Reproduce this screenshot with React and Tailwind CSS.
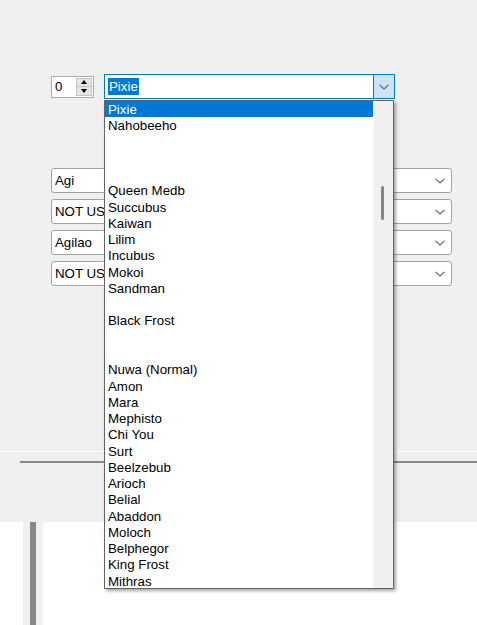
import React from 'react'

const items = [
  'Pixie', 'Nahobeeho', '', '', '', 'Queen Medb', 'Succubus', 'Kaiwan', 'Lilim', 'Incubus',
  'Mokoi', 'Sandman', '', 'Black Frost', '', '', 'Nuwa (Normal)', 'Amon', 'Mara', 'Mephisto',
  'Chi You', 'Surt', 'Beelzebub', 'Arioch', 'Belial', 'Abaddon', 'Moloch', 'Belphegor',
  'King Frost', 'Mithras',
]

function Chevron({ className }) {
  return (
    <svg className={className} width="10" height="6" viewBox="0 0 10 6" fill="none">
      <path d="M0.5 0.8 L5 5 L9.5 0.8" stroke="#606060" strokeWidth="1.1" />
    </svg>
  )
}

function Spinner() {
  return (
    <div className="flex w-[43px] h-[22px] border border-[#acacac] bg-white">
      <div className="flex-1 pl-[3px] leading-[20px]">0</div>
      <div className="w-[16px] my-[1px] mr-[1px] flex flex-col bg-[#e6e6e6] border border-[#c4c4c4]">
        <div className="flex-1 flex items-center justify-center border-b border-[#c4c4c4]">
          <div className="w-0 h-0 border-l-[3.5px] border-r-[3.5px] border-b-[4px] border-l-transparent border-r-transparent border-b-black" />
        </div>
        <div className="flex-1 flex items-center justify-center">
          <div className="w-0 h-0 border-l-[3.5px] border-r-[3.5px] border-t-[4px] border-l-transparent border-r-transparent border-t-black" />
        </div>
      </div>
    </div>
  )
}

function Select({ label }) {
  return (
    <div className="flex items-center w-[401px] h-[25px] rounded-[3px] border border-[#a3a3a3] bg-white pl-[3px]">
      <span className="flex-1 whitespace-nowrap overflow-hidden">{label}</span>
      <Chevron className="mr-[6px]" />
    </div>
  )
}

export default function App() {
  return (
    <div className="relative w-[477px] h-[625px] flex flex-col bg-white overflow-hidden text-[13.3px] text-black font-['Liberation_Sans',Arial,sans-serif]">
      <div className="h-[451px] bg-[#f0f0f0] pt-[74px] pl-[51px]">
        <div className="flex items-center gap-[10px]">
          <Spinner />
          <div className="flex w-[291px] h-[25px] border border-[#0078d7] bg-white">
            <div className="flex-1 flex items-center pl-[3px]">
              <span className="bg-[#0078d7] text-white leading-[17px] px-px">Pixie</span>
            </div>
            <div className="w-[21px] flex items-center justify-center bg-[#cce4f7] border-l border-[#0078d7]">
              <Chevron />
            </div>
          </div>
        </div>
        <div className="mt-[69px] flex flex-col gap-[6px]">
          <Select label="Agi" />
          <Select label="NOT USED" />
          <Select label="Agilao" />
          <Select label="NOT USED" />
        </div>
      </div>
      <div className="h-px bg-white" />
      <div className="h-[70px] bg-[#f0f0f0] pt-[9px] pl-[20px]">
        <div className="h-[2px] bg-[#8a8a8a]" />
      </div>
      <div className="flex-1 bg-white pl-[23px]">
        <div className="w-[20px] h-full bg-[#f0f0f0] pl-[7px]">
          <div className="w-[6px] h-full bg-[#888888]" />
        </div>
      </div>

      <div className="absolute left-[104px] top-[100px] w-[290px] h-[489px] flex overflow-hidden border border-[#646464] bg-white shadow-[2px_2px_3px_rgba(0,0,0,0.35)]">
        <div className="w-[268px] flex flex-col">
          {items.map((name, i) => (
            <div
              key={i}
              className={`shrink-0 h-[16.28px] leading-[16.28px] pt-px pl-[3px] whitespace-nowrap ${i === 0 ? 'bg-[#0078d7] text-white' : ''}`}
            >
              {name}
            </div>
          ))}
        </div>
        <div className="w-[20px] bg-[#f0f0f0] pt-[85px] pl-[8px]">
          <div className="w-[3px] h-[34px] rounded-full bg-[#858585]" />
        </div>
      </div>
    </div>
  )
}
